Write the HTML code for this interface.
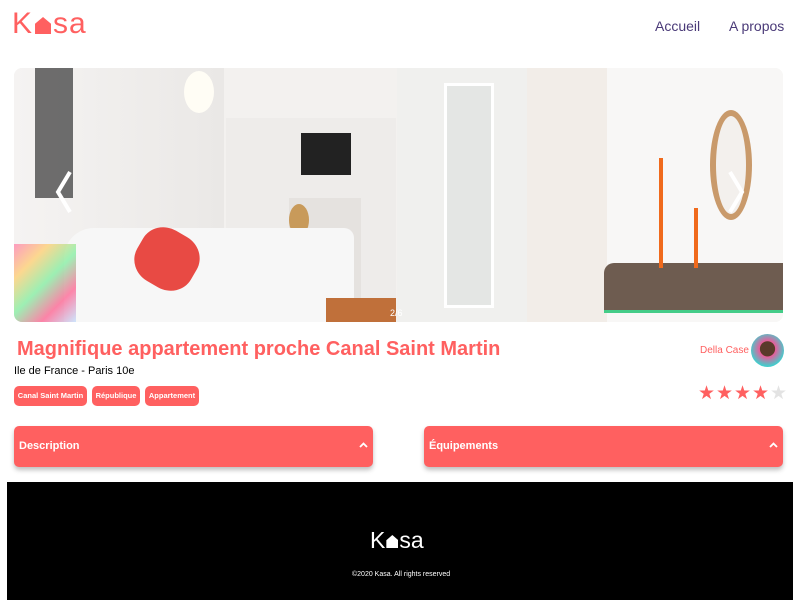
<!DOCTYPE html>
<html><head><meta charset="utf-8"><style>
*{margin:0;padding:0;box-sizing:border-box}
body{width:800px;height:600px;background:#fff;font-family:"Liberation Sans",sans-serif;position:relative;overflow:hidden}
.a{position:absolute}
.logo{color:#ff6060;font-size:30px;letter-spacing:1px}
nav a{position:absolute;top:18px;color:#4a3a78;font-size:14px;text-decoration:none}
.gal{left:14px;top:68px;width:769px;height:254px;border-radius:8px;overflow:hidden;background:#f3f1ef}
.tag{position:absolute;top:386px;height:20px;background:#ff6060;color:#fff;font-size:7.5px;font-weight:bold;border-radius:5px;line-height:20px;text-align:center;white-space:nowrap}
.col{position:absolute;top:426px;height:41px;background:#ff6060;border-radius:5px;box-shadow:0 3px 5px rgba(0,0,0,.25);color:#fff;font-weight:bold;font-size:11px;line-height:41px;padding-left:5px}
.col svg{position:absolute;right:5px;top:16px}
.star{position:absolute;top:382px;font-size:19px;color:#ff6060}
</style></head><body>
<div class="a logo" style="left:12px;top:7px">K<span style="display:inline-block;width:16px;height:17px;background:#ff6060;clip-path:polygon(0 40%,50% 0,100% 40%,100% 100%,0 100%);vertical-align:-1px;margin:0 2px"></span>sa</div>
<nav><a style="left:655px">Accueil</a><a style="left:729px">A propos</a></nav>

<div class="a gal">
 <div class="a" style="left:0;top:0;width:210px;height:254px;background:linear-gradient(90deg,#f5f3f2,#eae8e6)"></div>
 <div class="a" style="left:21px;top:0;width:38px;height:130px;background:#555;opacity:.85"></div>
 <div class="a" style="left:170px;top:3px;width:30px;height:42px;border-radius:50%;background:#fffdf5"></div>
 <div class="a" style="left:212px;top:50px;width:170px;height:204px;background:#eeecea"></div>
 <div class="a" style="left:287px;top:65px;width:50px;height:42px;background:#222"></div>
 <div class="a" style="left:275px;top:130px;width:72px;height:160px;background:#e5e2df"></div>
 <div class="a" style="left:275px;top:136px;width:20px;height:32px;border-radius:50%;background:#c89a5a"></div>
 <div class="a" style="left:50px;top:160px;width:290px;height:94px;background:#f7f7f7;border-radius:30px 10px 0 0"></div>
 <div class="a" style="left:122px;top:162px;width:62px;height:58px;background:#e84a44;border-radius:40%;transform:rotate(30deg)"></div>
 <div class="a" style="left:0;top:176px;width:62px;height:78px;background:linear-gradient(135deg,#f7a,#fc6,#7e9,#f58,#bdf);opacity:.7"></div>
 <div class="a" style="left:312px;top:230px;width:70px;height:24px;background:#c0703a"></div>
 <div class="a" style="left:383px;top:0;width:130px;height:254px;background:#f0f0ee"></div>
 <div class="a" style="left:430px;top:15px;width:50px;height:225px;border:3px solid #fff;background:#e4e6e4"></div>
 <div class="a" style="left:513px;top:0;width:80px;height:254px;background:#f2ede8"></div>
 <div class="a" style="left:593px;top:0;width:176px;height:254px;background:#f8f7f6"></div>
 <div class="a" style="left:696px;top:42px;width:42px;height:110px;border:6px solid #c99a6b;border-radius:50%;background:#f3f0ed"></div>
 <div class="a" style="left:590px;top:195px;width:179px;height:50px;background:#6e5c50;border-radius:10px 0 0 0;border-bottom:3px solid #4c8"></div>
 <div class="a" style="left:645px;top:90px;width:4px;height:110px;background:#f06a1c"></div>
 <div class="a" style="left:680px;top:140px;width:4px;height:60px;background:#f06a1c"></div>
 <svg class="a" style="left:38px;top:100px" width="24" height="48"><path d="M18 4 L6 24 L18 44" stroke="#fff" stroke-width="4" fill="none"/></svg>
 <svg class="a" style="left:710px;top:100px" width="24" height="48"><path d="M6 4 L18 24 L6 44" stroke="#fff" stroke-width="4" fill="none"/></svg>
 <div class="a" style="left:376px;top:240px;color:#fff;font-size:9px">2/6</div>
</div>

<div class="a" style="left:17px;top:338px;color:#ff6060;font-size:20px;font-weight:bold">Magnifique appartement proche Canal Saint Martin</div>
<div class="a" style="left:14px;top:365px;font-size:11px;color:#000">Ile de France - Paris 10e</div>
<div class="tag" style="left:14px;width:73px">Canal Saint Martin</div>
<div class="tag" style="left:92px;width:48px">République</div>
<div class="tag" style="left:145px;width:54px">Appartement</div>
<div class="a" style="left:700px;top:345px;color:#ff6060;font-size:10px">Della Case</div>
<div class="a" style="left:751px;top:334px;width:33px;height:33px;border-radius:50%;background:radial-gradient(circle at 50% 45%,#5a3a2a 30%,#e95c9a 32%,#4cc 70%)"></div>
<div class="star" style="left:698px">★</div><div class="star" style="left:716px">★</div><div class="star" style="left:734px">★</div><div class="star" style="left:752px">★</div><div class="star" style="left:770px;color:#e3e3e3">★</div>
<div class="col" style="left:14px;width:359px">Description<svg width="9" height="6"><path d="M1 5 L4.5 1.5 L8 5" stroke="#fff" stroke-width="1.8" fill="none"/></svg></div>
<div class="col" style="left:424px;width:359px">Équipements<svg width="9" height="6"><path d="M1 5 L4.5 1.5 L8 5" stroke="#fff" stroke-width="1.8" fill="none"/></svg></div>

<div class="a" style="left:7px;top:482px;width:786px;height:118px;background:#000"></div>
<div class="a" style="left:370px;top:527px;color:#fff;font-size:23px">K<span style="display:inline-block;width:12px;height:13px;background:#fff;clip-path:polygon(0 40%,50% 0,100% 40%,100% 100%,0 100%);margin:0 1px"></span>sa</div>
<div class="a" style="left:352px;top:571px;color:#fff;font-size:7px">©2020 Kasa. All rights reserved</div>
</body></html>
